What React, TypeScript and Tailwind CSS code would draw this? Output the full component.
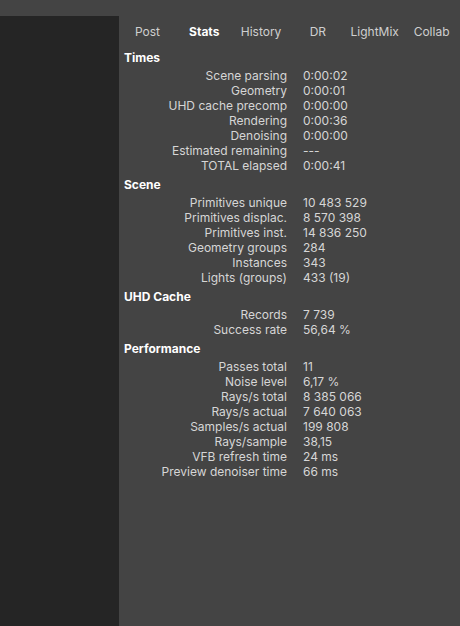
import React from 'react';

type Row = [string, string];

const sections: { title: string; rows: Row[] }[] = [
  {
    title: 'Times',
    rows: [
      ['Scene parsing', '0:00:02'],
      ['Geometry', '0:00:01'],
      ['UHD cache precomp', '0:00:00'],
      ['Rendering', '0:00:36'],
      ['Denoising', '0:00:00'],
      ['Estimated remaining', '---'],
      ['TOTAL elapsed', '0:00:41'],
    ],
  },
  {
    title: 'Scene',
    rows: [
      ['Primitives unique', '10 483 529'],
      ['Primitives displac.', '8 570 398'],
      ['Primitives inst.', '14 836 250'],
      ['Geometry groups', '284'],
      ['Instances', '343'],
      ['Lights (groups)', '433 (19)'],
    ],
  },
  {
    title: 'UHD Cache',
    rows: [
      ['Records', '7 739'],
      ['Success rate', '56,64 %'],
    ],
  },
  {
    title: 'Performance',
    rows: [
      ['Passes total', '11'],
      ['Noise level', '6,17 %'],
      ['Rays/s total', '8 385 066'],
      ['Rays/s actual', '7 640 063'],
      ['Samples/s actual', '199 808'],
      ['Rays/sample', '38,15'],
      ['VFB refresh time', '24 ms'],
      ['Preview denoiser time', '66 ms'],
    ],
  },
];

const tabs = ['Post', 'Stats', 'History', 'DR', 'LightMix', 'Collab'];

export default function App() {
  return (
    <div
      className="w-[460px] h-[626px] bg-[#444444] flex flex-col overflow-hidden text-[12px]"
      style={{ fontFamily: 'Inter, "Noto Sans", sans-serif' }}
    >
      <div className="h-[16px] shrink-0" />
      <div className="flex flex-1 min-h-0">
        <div className="w-[119px] shrink-0 bg-[#252525]" />
        <div className="flex-1 flex flex-col">
          <div className="flex h-[30px] pt-[2px] items-center">
            {tabs.map((t) => (
              <div
                key={t}
                className={`flex-1 text-center ${t === 'Stats' ? 'font-bold text-white' : 'text-[#cfcfcf]'}`}
              >
                {t}
              </div>
            ))}
          </div>
          {sections.map((s) => (
            <div key={s.title}>
              <div className="pl-[5px] pt-[4px] pb-[3px] leading-[15px] font-bold text-white">
                {s.title}
              </div>
              {s.rows.map(([label, value]) => (
                <div key={label} className="flex leading-[15px] text-[#d6d6d6]">
                  <div className="w-[168px] text-right whitespace-nowrap">{label}</div>
                  <div className="pl-[16px] whitespace-nowrap">{value}</div>
                </div>
              ))}
            </div>
          ))}
        </div>
      </div>
    </div>
  );
}
